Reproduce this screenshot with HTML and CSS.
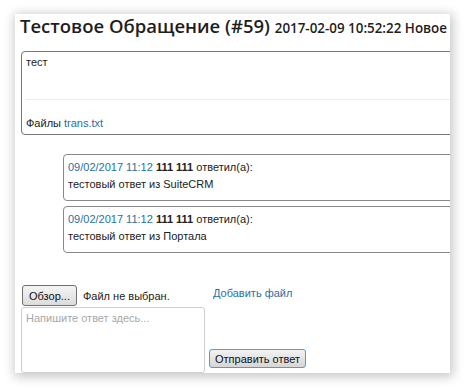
FILE: index.html
```html
<html>
	<head>
		<link rel="stylesheet" href="styles.css">
	</head>
	<body>
	<div class="frame">
		<div class="page">
			<h1 class="caseTitle">Тестовое Обращение (#59) <span class="caseMeta">2017-02-09 10:52:22 Новое</span></h1>

			<div class="caseBox">
				<div class="caseText">тест</div>
				<div class="caseFiles">Файлы <a href="#">trans.txt</a></div>
			</div>

			<div class="updates">
				<div class="updateBox">
					<div><a href="#">09/02/2017 11:12</a> <b>111 111</b> ответил(а):</div>
					<div>тестовый ответ из SuiteCRM</div>
				</div>
				<div class="updateBox">
					<div><a href="#">09/02/2017 11:12</a> <b>111 111</b> ответил(а):</div>
					<div>тестовый ответ из Портала</div>
				</div>
			</div>

			<form class="replyForm">
				<div class="fileField">
					<button type="button" class="browseBtn">Обзор...</button>
					<span class="fileName">Файл не выбран.</span>
				</div>
				<div class="addFile"><a href="#">Добавить файл</a></div>
				<textarea class="replyText" placeholder="Напишите ответ здесь..."></textarea>
				<div class="sendCell"><button type="button" class="sendBtn">Отправить ответ</button></div>
			</form>
		</div>
	</div>
	</body>
</html>
```

FILE: styles.css
```css
body {
	margin: 0;
	background: #fff;
	font-family: "Liberation Sans", Arial, sans-serif;
	font-size: 11px;
	color: #222;
}

a {
	color: #2a6fa3;
	text-decoration: none;
}

/* window with its shadow */
.frame {
	margin: 14px 0 0 15px;
	width: 435px;
	height: 359px;
	overflow: hidden;
	background: #fff;
	box-shadow: 1px 2px 10px 2px rgba(0,0,0,0.22);
}

.page {
	width: 480px;
	padding: 1px 0 0 5px;
}

.caseTitle {
	margin: 0;
	font-family: "Open Sans", sans-serif;
	font-weight: 600;
	font-size: 18.5px;
	line-height: 22px;
	color: #1e1e1e;
	white-space: nowrap;
}

.caseMeta {
	font-size: 13.4px;
	font-weight: 600;
}

.caseBox {
	margin: 12px 0 0 1px;
	border: 1px solid #777;
	border-radius: 4px;
	padding: 3px 0 4px 4px;
	line-height: 14px;
}

.caseText {
	height: 44px;
	border-bottom: 1px solid #ececec;
}

.caseFiles {
	padding-top: 16px;
}

.updates {
	margin: 19px 0 0 43px;
	display: flex;
	flex-direction: column;
	gap: 5px;
}

.updateBox {
	height: 40px;
	border: 1px solid #888;
	border-radius: 4px;
	padding: 4px 4px 1px 4px;
	line-height: 17px;
}

.replyForm {
	margin: 31px 0 0 1px;
	display: grid;
	grid-template-columns: 188px auto;
	column-gap: 0;
}

.fileField {
	display: flex;
	align-items: center;
	gap: 6px;
	height: 23px;
}

.browseBtn {
	margin-left: 1px;
	height: 21px;
	padding: 0 6px;
	font-family: "Liberation Sans", Arial, sans-serif;
	font-size: 11px;
	color: #111;
	border: 1px solid #707070;
	border-radius: 3px;
	background: linear-gradient(#f4f4f4, #dcdcdc);
}

.addFile {
	padding: 3px 0 0 4px;
}

.replyText {
	width: 184px;
	height: 66px;
	margin: 0;
	padding: 4px 4px;
	border: 1px solid #cfcfcf;
	border-radius: 3px;
	resize: none;
	font-family: "Liberation Sans", Arial, sans-serif;
	font-size: 11px;
	box-sizing: border-box;
}

.replyText::placeholder {
	color: #a8a8a8;
}

.sendCell {
	display: flex;
	align-items: flex-end;
	padding: 0 0 5px 0;
}

.sendBtn {
	height: 19px;
	padding: 0 5px;
	font-family: "Liberation Sans", Arial, sans-serif;
	font-size: 11px;
	color: #111;
	border: 1px solid #4a9fd6;
	border-radius: 3px;
	background: linear-gradient(#f2f2f2, #d6d6d6);
}
```
